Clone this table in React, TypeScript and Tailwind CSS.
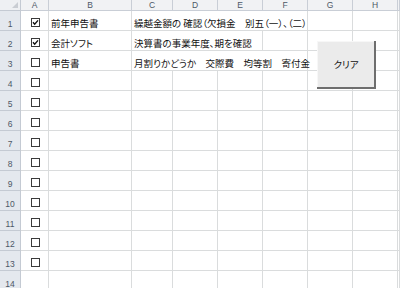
import React from "react";

const GRID = "border-r border-b border-[#dadcdd]";
const JP = "[font-family:'Noto_Sans_CJK_JP','Noto_Sans',sans-serif] [font-feature-settings:'palt'] text-[9.5px] text-[#111]";
const HDR = "[font-family:'Liberation_Sans',Arial,sans-serif] text-[8.5px] text-[#4d5866]";

function Check({ checked }: { checked: boolean }) {
  return (
    <svg width="9" height="9" viewBox="0 0 9 9" className="block">
      <rect x="0.5" y="0.5" width="8" height="8" fill="#fff" stroke="#3a3a3a" strokeWidth="1" />
      {checked && (
        <path d="M2 4.3 L3.7 6.2 L7 2.4" fill="none" stroke="#111" strokeWidth="1.4" />
      )}
    </svg>
  );
}

type RowSpec = { b?: string; c?: string; span?: number; checked?: boolean; box: boolean };

const rows: RowSpec[] = [
  { b: "前年申告書", c: "繰越金額の 確認（欠損金　別五（一）、（二）", span: 4, checked: true, box: true },
  { b: "会計ソフト", c: "決算書の事業年度、期を確認", span: 3, checked: true, box: true },
  { b: "申告書", c: "月割りかどうか　交際費　均等割　寄付金", span: 4, checked: false, box: true },
  ...Array.from({ length: 10 }, () => ({ box: true, checked: false })),
  { box: false },
];

const cols = ["A", "B", "C", "D", "E", "F", "G", "H", ""];

export default function App() {
  return (
    <div className="relative w-[400px] h-[288px] overflow-hidden bg-white">
      <div className="grid grid-cols-[21px_28px_83px_41px_45px_45px_45px_45px_45px_1fr] grid-rows-[11px_repeat(14,20px)]">
        {/* corner */}
        <div className="relative bg-[#eef0f3] border-r border-b border-[#c4cad3]">
          <div className="absolute right-[2px] bottom-[2px] w-0 h-0 border-l-[6px] border-l-transparent border-b-[6px] border-b-[#c9cdd3]" />
        </div>
        {cols.map((c, i) => (
          <div
            key={"h" + i}
            className={`bg-[#f1f2f4] border-r border-b border-[#c9ced6] flex items-center justify-center leading-[10px] ${HDR}`}
          >
            {c}
          </div>
        ))}
        {rows.map((r, ri) => {
          const cells: React.ReactNode[] = [];
          cells.push(
            <div
              key={"rn" + ri}
              className={`bg-[#e4e8ee] border-r border-b border-[#c4cad3] flex items-end justify-center pb-[1px] leading-[10px] ${HDR}`}
            >
              {ri + 1}
            </div>
          );
          cells.push(
            <div key={"a" + ri} className={`${GRID} flex items-start pl-[10px] pt-[7px]`}>
              {r.box && <Check checked={!!r.checked} />}
            </div>
          );
          cells.push(
            <div key={"b" + ri} className={`${GRID} flex items-end pl-[2px] leading-[14px] whitespace-nowrap ${JP}`}>
              {r.b ?? ""}
            </div>
          );
          if (r.c) {
            const span = r.span ?? 1;
            const spanCls = span === 4 ? "col-span-4" : span === 3 ? "col-span-3" : "";
            cells.push(
              <div
                key={"c" + ri}
                className={`${GRID} ${spanCls} flex items-end pl-[2px] leading-[14px] whitespace-nowrap ${JP}`}
              >
                {r.c}
              </div>
            );
            const rest = 7 - span;
            for (let k = 0; k < rest; k++) cells.push(<div key={"x" + ri + "-" + k} className={GRID} />);
          } else {
            for (let k = 0; k < 7; k++) cells.push(<div key={"x" + ri + "-" + k} className={GRID} />);
          }
          return cells;
        })}
      </div>

      {/* clear button */}
      <div className="absolute left-[317px] top-[41px] w-[59px] h-[48px] bg-[#6e6e6e]">
        <div className={`w-[57px] h-[46px] bg-[#ebebeb] border-t border-l border-[#f7f7f7] flex items-center justify-center ${JP}`}>
          クリア
        </div>
      </div>
    </div>
  );
}
